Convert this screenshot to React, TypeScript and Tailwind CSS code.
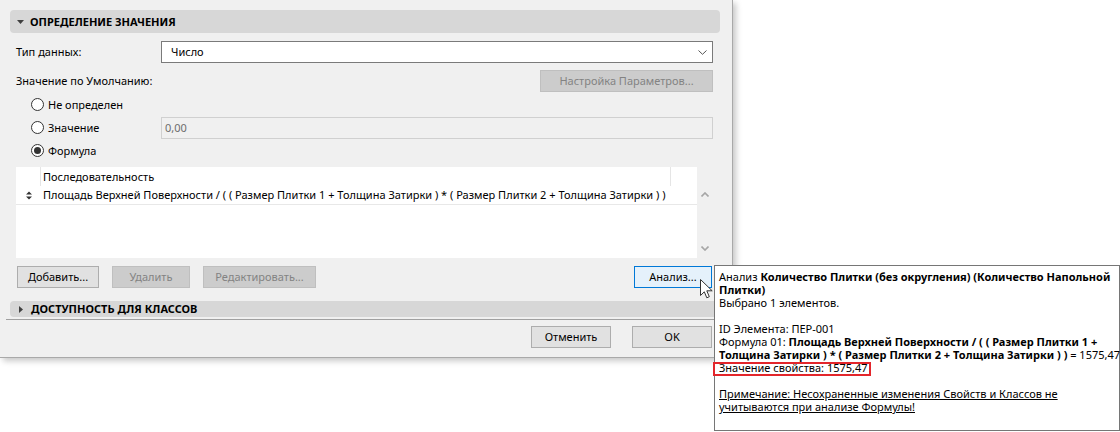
import React from "react";

const font = "font-['Noto_Sans','Liberation_Sans',sans-serif]";

function Radio({ checked }: { checked?: boolean }) {
  return (
    <span className="w-[13px] h-[13px] rounded-full border border-[#333333] bg-white flex items-center justify-center shrink-0">
      {checked && <span className="w-[7px] h-[7px] rounded-full bg-[#333333]" />}
    </span>
  );
}

function SectionHeader({ title, open }: { title: string; open?: boolean }) {
  return (
    <div
      className={`ml-[10px] w-[710px] rounded-[4px] bg-[#d7d7d7] flex items-center ${
        open ? "h-[23px] pl-[7px] gap-[6px]" : "h-[16px] pl-[9px] gap-[8px]"
      }`}
    >
      {open ? (
        <svg width="7" height="4" viewBox="0 0 7 4">
          <path d="M0 0h7L3.5 4z" fill="#404040" />
        </svg>
      ) : (
        <svg width="4" height="7" viewBox="0 0 4 7">
          <path d="M0 0v7l4-3.5z" fill="#404040" />
        </svg>
      )}
      <span className="font-bold text-black">{title}</span>
    </div>
  );
}

function Button({
  label,
  width,
  disabled,
  focused,
}: {
  label: string;
  width: string;
  disabled?: boolean;
  focused?: boolean;
}) {
  let look = "bg-[#e1e1e1] border-[#adadad] text-black";
  if (disabled) look = "bg-[#cccccc] border-[#bfbfbf] text-[#838383]";
  if (focused) look = "bg-[#e5f1fb] border-[#0078d7] text-black";
  return (
    <div className={`${width} h-[22px] border flex items-center justify-center shrink-0 ${look}`}>
      {label}
    </div>
  );
}

function SortIcon() {
  return (
    <svg width="6" height="9" viewBox="0 0 6 9">
      <path d="M0 3.5L3 0.5L6 3.5z M0 5.5L3 8.5L6 5.5z" fill="#333333" />
    </svg>
  );
}

function Caret({ up }: { up?: boolean }) {
  return (
    <svg width="8" height="5" viewBox="0 0 8 5">
      <path
        d={up ? "M0.5 4.5L4 1L7.5 4.5" : "M0.5 0.5L4 4L7.5 0.5"}
        fill="none"
        stroke="#a6a6a6"
        strokeWidth="1.6"
      />
    </svg>
  );
}

export default function App() {
  return (
    <div className={`relative w-[1120px] h-[432px] bg-white overflow-hidden text-[11px] leading-[16px] text-black ${font}`}>
      {/* dialog */}
      <div className="w-[733px] h-[358px] bg-[#f0f0f0] border-r border-b border-[#a9a9a9] shadow-[3px_3px_6px_rgba(0,0,0,0.22)] flex flex-col pt-[10px]">
        <SectionHeader title="ОПРЕДЕЛЕНИЕ ЗНАЧЕНИЯ" open />

        <div className="flex items-center h-[22px] mt-[8px] pl-[16px]">
          <span className="w-[145px]">Тип данных:</span>
          <div className="w-[552px] h-[22px] bg-white border border-[#7a7a7a] flex items-center pl-[9px] pr-[5px]">
            <span className="flex-1">Число</span>
            <svg width="9" height="5" viewBox="0 0 9 5">
              <path d="M0.5 0.5L4.5 4.3L8.5 0.5" fill="none" stroke="#555555" strokeWidth="1" />
            </svg>
          </div>
        </div>

        <div className="flex items-center h-[22px] mt-[7px] pl-[16px]">
          <span className="w-[524px]">Значение по Умолчанию:</span>
          <Button label="Настройка Параметров..." width="w-[173px]" disabled />
        </div>

        <div className="flex flex-col mt-[1px] pl-[31px]">
          <div className="flex items-center h-[23px] gap-[4px]">
            <Radio />
            <span>Не определен</span>
          </div>
          <div className="flex items-center h-[23px]">
            <div className="flex items-center gap-[4px] w-[130px]">
              <Radio />
              <span>Значение</span>
            </div>
            <div className="w-[552px] h-[22px] bg-[#f0f0f0] border border-[#d0d0d0] flex items-center pl-[3px] text-[#6d6d6d]">
              0,00
            </div>
          </div>
          <div className="flex items-center h-[23px] gap-[4px]">
            <Radio checked />
            <span>Формула</span>
          </div>
        </div>

        {/* formula sequence table */}
        <div className="flex ml-[16px] mt-[5px] w-[697px] h-[91px]">
          <div className="w-[681px] bg-white flex flex-col overflow-hidden">
            <div className="flex h-[19px] items-center">
              <div className="w-[25px] h-full border-r border-[#e5e5e5] shrink-0" />
              <div className="w-[630px] h-full border-r border-[#e5e5e5] flex items-center pl-[2px] shrink-0">
                Последовательность
              </div>
            </div>
            <div className="flex h-[19px] items-center border-b border-[#e8e8e8]">
              <div className="w-[25px] flex justify-center pl-[1px] shrink-0">
                <SortIcon />
              </div>
              <span className="pl-[2px] whitespace-nowrap">
                Площадь Верхней Поверхности / ( ( Размер Плитки 1 + Толщина Затирки ) * ( Размер Плитки 2 + Толщина Затирки ) )
              </span>
            </div>
          </div>
          <div className="w-[16px] flex flex-col items-center justify-between pt-[25px] pb-[7px]">
            <Caret up />
            <Caret />
          </div>
        </div>

        <div className="flex items-center gap-[13px] mt-[8px] pl-[17px] pr-[20px]">
          <Button label="Добавить..." width="w-[82px]" />
          <Button label="Удалить" width="w-[78px]" disabled />
          <Button label="Редактировать..." width="w-[113px]" disabled />
          <div className="ml-auto">
            <Button label="Анализ..." width="w-[78px]" focused />
          </div>
        </div>

        <div className="mt-[13px]">
          <SectionHeader title="ДОСТУПНОСТЬ ДЛЯ КЛАССОВ" />
        </div>
        <div className="ml-[6px] w-[714px] h-px bg-[#a0a0a0] mt-[2px]" />

        <div className="flex justify-end gap-[21px] mt-[6px] pr-[20px]">
          <Button label="Отменить" width="w-[80px]" />
          <Button label="OK" width="w-[80px]" />
        </div>
      </div>

      {/* analysis popup */}
      <div className="absolute left-[714px] top-[265px] w-[406px] h-[166px] bg-white border border-[#767676] pl-[4px] pt-[4px] leading-[13px] whitespace-nowrap">
        <div>
          Анализ <b>Количество Плитки (без округления) (Количество Напольной</b>
        </div>
        <div>
          <b>Плитки)</b>
        </div>
        <div>Выбрано 1 элементов.</div>
        <div className="h-[13px]" />
        <div>ID Элемента: ПЕР-001</div>
        <div>
          Формула 01: <b>Площадь Верхней Поверхности / ( ( Размер Плитки 1 +</b>
        </div>
        <div>
          <b>Толщина Затирки ) * ( Размер Плитки 2 + Толщина Затирки ) )</b> = 1575,47
        </div>
        <div>
          <span className="relative inline-block">
            Значение свойства: 1575,47
            <span className="absolute -left-[6px] -right-[3px] top-[1px] h-[14px] border-2 border-[#e3262b]" />
          </span>
        </div>
        <div className="h-[13px]" />
        <div className="underline">Примечание: Несохраненные изменения Свойств и Классов не</div>
        <div className="underline">учитываются при анализе Формулы!</div>
      </div>

      {/* mouse pointer */}
      <svg className="absolute left-[700px] top-[279px]" width="13" height="20" viewBox="0 0 13 20">
        <path
          d="M0.5 0.5V16.5L4.3 12.8L6.8 18.8L9.3 17.7L6.8 11.8H12.2Z"
          fill="white"
          stroke="#333333"
          strokeWidth="1"
          strokeLinejoin="round"
        />
      </svg>
    </div>
  );
}
